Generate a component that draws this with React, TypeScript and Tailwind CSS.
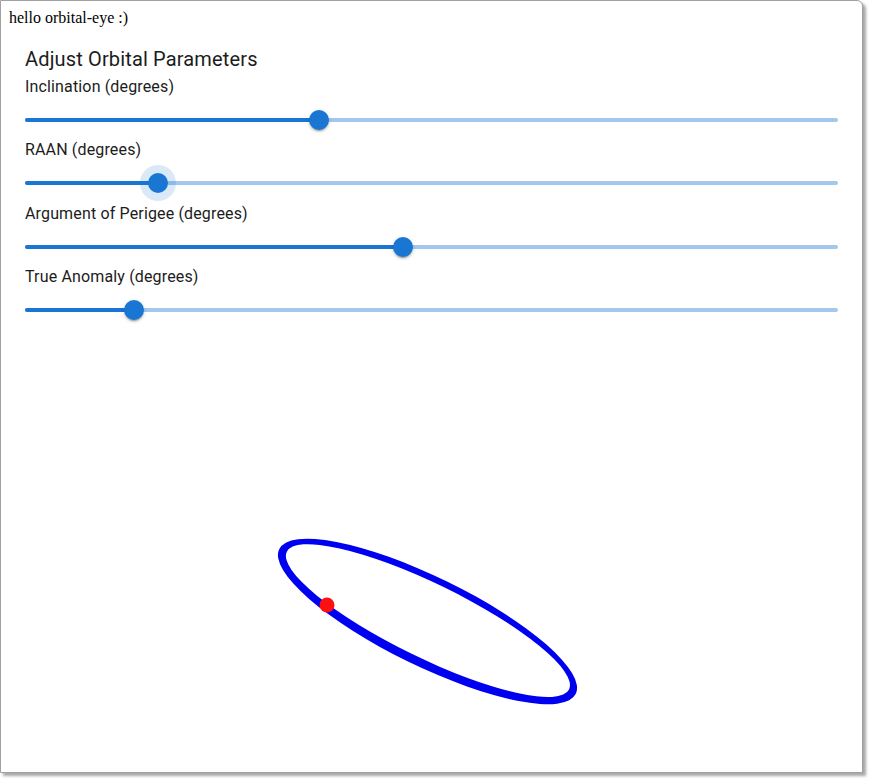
import React from 'react';

interface Param {
  label: string;
  pct: number;
  active?: boolean;
}

const params: Param[] = [
  { label: 'Inclination (degrees)', pct: 36.16 },
  { label: 'RAAN (degrees)', pct: 16.36, active: true },
  { label: 'Argument of Perigee (degrees)', pct: 46.49 },
  { label: 'True Anomaly (degrees)', pct: 13.41 },
];

const Slider: React.FC<Param> = ({ label, pct, active }) => {
  return (
    <div className="flex flex-col h-[63.4px]">
      <div className="text-[16px] leading-6 tracking-[0.00938em] text-[#1c1c1c]">{label}</div>
      <div className="relative h-[30px] mt-[6px] flex items-center">
        <div className="absolute inset-x-0 h-1 rounded-full bg-[#1976d2] opacity-40" />
        <div className="absolute left-0 h-1 rounded-full bg-[#1976d2]" style={{ width: `${pct}%` }} />
        <div
          className={
            'absolute w-5 h-5 -ml-2.5 rounded-full bg-[#1976d2] ' +
            (active
              ? 'shadow-[0_0_0_8px_rgba(25,118,210,0.16)]'
              : 'shadow-[0_3px_1px_-2px_rgba(0,0,0,0.2),0_2px_2px_0_rgba(0,0,0,0.14),0_1px_5px_0_rgba(0,0,0,0.12)]')
          }
          style={{ left: `${pct}%` }}
        />
      </div>
    </div>
  );
};

const Orbit: React.FC = () => {
  const outer = 'M -165 0 A 165 44.5 0 1 0 165 0 A 165 44.5 0 1 0 -165 0 Z';
  const inner = 'M -157 -1 A 157 37 0 1 0 157 -1 A 157 37 0 1 0 -157 -1 Z';
  return (
    <svg className="w-full flex-1" width="861" height="430">
      <g transform="translate(426.5 279.5) rotate(26)">
        <path d={outer + ' ' + inner} fill="#0000f0" fillRule="evenodd" />
      </g>
      <circle cx="326" cy="263" r="7.5" fill="#ff1010" />
    </svg>
  );
};

export default function App() {
  return (
    <div className="w-[870px] h-[780px] bg-white">
      <div className="w-[863px] h-[773px] flex flex-col bg-white border border-[#a0a0a0] rounded-tr-md shadow-[3px_3px_3px_rgba(0,0,0,0.35)] overflow-hidden">
        <div className="pt-[8px] pl-[8px] text-[16px] leading-[18px] text-black [font-family:'Liberation_Serif',serif]">
          hello orbital-eye :)
        </div>
        <div className="px-6 pt-[18px] pb-[13px] [font-family:Roboto,sans-serif]">
          <h2 className="text-[20px] leading-7 tracking-[0.0075em] text-[#1c1c1c] mb-[2px]">Adjust Orbital Parameters</h2>
          {params.map((p) => (
            <Slider key={p.label} {...p} />
          ))}
        </div>
        <Orbit />
      </div>
    </div>
  );
}
